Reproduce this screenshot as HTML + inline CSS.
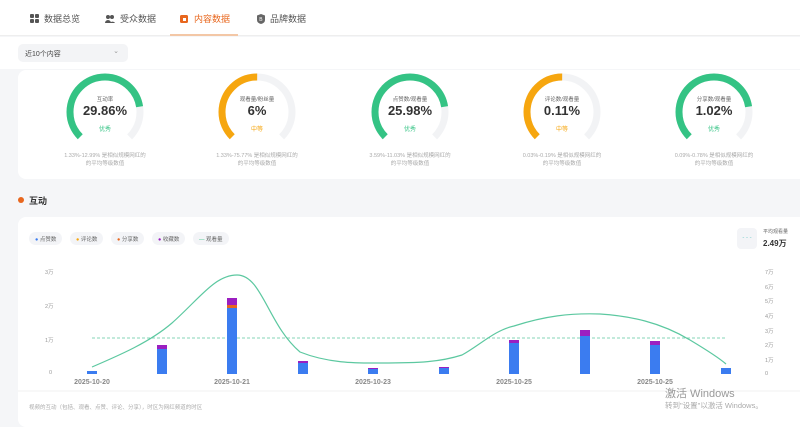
<!DOCTYPE html>
<html><head><meta charset="utf-8"><style>
*{margin:0;padding:0;box-sizing:border-box}
body{width:800px;height:418px;overflow:hidden;background:#f5f6f8;font-family:"Liberation Sans","Noto Sans CJK SC",sans-serif;position:relative;color:#333}
.nav{position:absolute;left:0;top:0;width:800px;height:36px;background:#fff;border-bottom:1px solid #eee}
.tab{position:absolute;top:12px;font-size:9px;color:#555;display:flex;align-items:center;gap:5px}
.tab.act{color:#e8671e}
.ul{position:absolute;left:170px;top:34px;width:68px;height:2px;background:#f3c7a6}
.top2{position:absolute;left:0;top:37px;width:800px;height:32px;background:#fff}
.dd{position:absolute;left:18px;top:44px;width:110px;height:18px;background:#f3f4f6;border-radius:5px;font-size:7px;color:#444;padding:5px 7px}
.card{position:absolute;background:#fff;border-radius:8px}
.g{position:absolute;width:120px;text-align:center}
.gl{position:absolute;top:95px;font-size:5.5px;color:#666;width:80px;text-align:center}
.gv{position:absolute;top:103px;font-size:13px;font-weight:bold;color:#333;width:80px;text-align:center}
.gs{position:absolute;top:124px;font-size:6px;width:80px;text-align:center}
.gd{position:absolute;top:152px;font-size:5.5px;color:#aaa;width:120px;text-align:center;line-height:8px}
.pill{position:absolute;top:232px;height:13px;border-radius:7px;background:#f3f4f7;font-size:5.5px;color:#666;padding:3px 6px}
.yl{position:absolute;font-size:5.5px;color:#999}
.xl{position:absolute;top:379px;font-size:7px;color:#888;font-weight:bold;width:60px;text-align:center}
</style></head><body>
<div class="nav">
 <div class="tab" style="left:30px"><svg width="9" height="9"><rect x="0" y="0" width="4" height="4" rx="1" fill="#555"/><rect x="5" y="0" width="4" height="4" rx="1" fill="#555"/><rect x="0" y="5" width="4" height="4" rx="1" fill="#555"/><rect x="5" y="5" width="4" height="4" rx="1" fill="#555"/></svg>数据总览</div>
 <div class="tab" style="left:105px"><svg width="10" height="8"><circle cx="3" cy="2" r="2" fill="#555"/><circle cx="7" cy="2" r="2" fill="#555"/><path d="M0 8a3 3 0 0 1 6 0zM5 8a3 3 0 0 1 5 0z" fill="#555"/></svg>受众数据</div>
 <div class="tab act" style="left:180px"><svg width="9" height="9"><rect x="0" y="1" width="8" height="8" rx="1.5" fill="#e8671e"/><rect x="3" y="4" width="3" height="3" fill="#fff"/></svg>内容数据</div>
 <div class="tab" style="left:257px"><svg width="8" height="10"><path d="M4 0L8 1.5V6Q8 9 4 10Q0 9 0 6V1.5Z" fill="#666"/><text x="2.3" y="7" font-size="5" fill="#fff">B</text></svg>品牌数据</div>
 <div class="ul"></div>
</div>
<div class="top2"></div>
<div class="dd">近10个内容<span style="position:absolute;right:9px;top:3px;color:#999">⌄</span></div>
<div class="card" style="left:18px;top:70px;width:790px;height:109px"></div>
<svg style="position:absolute;left:0;top:0" width="800" height="180">
 <g fill="none" stroke-width="7">
 <g transform="translate(105,112) rotate(135)"><circle r="35" stroke="#f2f3f5" stroke-dasharray="164.9 300"/><circle r="35" stroke="#34c384" stroke-dasharray="131.9 300"/></g>
 <g transform="translate(257,112) rotate(135)"><circle r="35" stroke="#f2f3f5" stroke-dasharray="164.9 300"/><circle r="35" stroke="#f6a60f" stroke-dasharray="82.5 300"/></g>
 <g transform="translate(410,112) rotate(135)"><circle r="35" stroke="#f2f3f5" stroke-dasharray="164.9 300"/><circle r="35" stroke="#34c384" stroke-dasharray="131.9 300"/></g>
 <g transform="translate(562,112) rotate(135)"><circle r="35" stroke="#f2f3f5" stroke-dasharray="164.9 300"/><circle r="35" stroke="#f6a60f" stroke-dasharray="82.5 300"/></g>
 <g transform="translate(714,112) rotate(135)"><circle r="35" stroke="#f2f3f5" stroke-dasharray="164.9 300"/><circle r="35" stroke="#34c384" stroke-dasharray="131.9 300"/></g>
 </g>
</svg>
<div class="gl" style="left:65px">互动率</div><div class="gv" style="left:65px">29.86%</div><div class="gs" style="left:65px;color:#34c384">优秀</div><div class="gd" style="left:45px">1.33%-12.99% 是相似规模网红的<br>的平均等级数值</div>
<div class="gl" style="left:217px">观看量/粉丝量</div><div class="gv" style="left:217px">6%</div><div class="gs" style="left:217px;color:#f6a60f">中等</div><div class="gd" style="left:197px">1.33%-75.77% 是相似规模网红的<br>的平均等级数值</div>
<div class="gl" style="left:370px">点赞数/观看量</div><div class="gv" style="left:370px">25.98%</div><div class="gs" style="left:370px;color:#34c384">优秀</div><div class="gd" style="left:350px">3.59%-11.03% 是相似规模网红的<br>的平均等级数值</div>
<div class="gl" style="left:522px">评论数/观看量</div><div class="gv" style="left:522px">0.11%</div><div class="gs" style="left:522px;color:#f6a60f">中等</div><div class="gd" style="left:502px">0.03%-0.19% 是相似规模网红的<br>的平均等级数值</div>
<div class="gl" style="left:674px">分享数/观看量</div><div class="gv" style="left:674px">1.02%</div><div class="gs" style="left:674px;color:#34c384">优秀</div><div class="gd" style="left:654px">0.09%-0.78% 是相似规模网红的<br>的平均等级数值</div>

<div style="position:absolute;left:18px;top:197px;width:6px;height:6px;border-radius:50%;background:#e8671e"></div>
<div style="position:absolute;left:29px;top:194px;font-size:9px;font-weight:bold;color:#333">互动</div>
<div class="card" style="left:18px;top:217px;width:790px;height:210px"></div>
<div class="pill" style="left:29px"><span style="color:#3b7cf0">●</span> 点赞数</div>
<div class="pill" style="left:70px"><span style="color:#f6a60f">●</span> 评论数</div>
<div class="pill" style="left:111px"><span style="color:#e8671e">●</span> 分享数</div>
<div class="pill" style="left:152px"><span style="color:#9b1fc1">●</span> 收藏数</div>
<div class="pill" style="left:193px"><span style="color:#34c384">—</span> 观看量</div>
<div style="position:absolute;left:737px;top:228px;width:20px;height:21px;background:#f3f4f7;border-radius:4px;font-size:6px;color:#7cc;text-align:center;line-height:21px">- - -</div>
<div style="position:absolute;left:763px;top:228px;font-size:5px;color:#666">平均观看量</div>
<div style="position:absolute;left:763px;top:238px;font-size:8px;font-weight:bold;color:#333">2.49万</div>
<div class="yl" style="left:45px;top:268px">3万</div><div class="yl" style="left:45px;top:302px">2万</div><div class="yl" style="left:45px;top:336px">1万</div><div class="yl" style="left:49px;top:370px">0</div>
<div class="yl" style="left:765px;top:268px">7万</div><div class="yl" style="left:765px;top:283px">6万</div><div class="yl" style="left:765px;top:297px">5万</div><div class="yl" style="left:765px;top:312px">4万</div><div class="yl" style="left:765px;top:327px">3万</div><div class="yl" style="left:765px;top:341px">2万</div><div class="yl" style="left:765px;top:356px">1万</div><div class="yl" style="left:765px;top:371px">0</div>
<svg style="position:absolute;left:0;top:0" width="800" height="418">
 <line x1="92" y1="338" x2="726" y2="338" stroke="#5cc8a0" stroke-width="0.8" stroke-dasharray="3 2"/>
 <g>
 <rect x="87" y="371" width="10" height="3" fill="#3b7cf0"/>
 <rect x="157" y="349" width="10" height="25" fill="#3b7cf0"/><rect x="157" y="345" width="10" height="4" fill="#9b1fc1"/>
 <rect x="227" y="308" width="10" height="66" fill="#3b7cf0"/><rect x="227" y="305" width="10" height="3" fill="#e8671e"/><rect x="227" y="298" width="10" height="7" fill="#9b1fc1"/>
 <rect x="298" y="363" width="10" height="11" fill="#3b7cf0"/><rect x="298" y="361" width="10" height="2" fill="#9b1fc1"/>
 <rect x="368" y="369" width="10" height="5" fill="#3b7cf0"/><rect x="368" y="368" width="10" height="1" fill="#9b1fc1"/>
 <rect x="439" y="368" width="10" height="6" fill="#3b7cf0"/><rect x="439" y="367" width="10" height="1" fill="#9b1fc1"/>
 <rect x="509" y="343" width="10" height="31" fill="#3b7cf0"/><rect x="509" y="340" width="10" height="3" fill="#9b1fc1"/>
 <rect x="580" y="336" width="10" height="38" fill="#3b7cf0"/><rect x="580" y="330" width="10" height="6" fill="#9b1fc1"/>
 <rect x="650" y="345" width="10" height="29" fill="#3b7cf0"/><rect x="650" y="341" width="10" height="4" fill="#9b1fc1"/>
 <rect x="721" y="368" width="10" height="6" fill="#3b7cf0"/>
 </g>
 <path d="M92 367 C120 355 150 342 172 323 C200 298 215 275 237 275 C262 275 268 325 300 352 C330 364 360 363 380 363 C420 363 440 362 462 355 C480 345 495 330 514 326 C545 316 570 313 600 314 C630 316 660 322 690 340 C705 349 718 357 726 364" fill="none" stroke="#5cc8a0" stroke-width="1.2"/>
 <line x1="18" y1="391" x2="800" y2="391" stroke="#f0f0f0" stroke-width="1"/>
</svg>
<div class="xl" style="left:62px">2025-10-20</div><div class="xl" style="left:202px">2025-10-21</div><div class="xl" style="left:343px">2025-10-23</div><div class="xl" style="left:484px">2025-10-25</div><div class="xl" style="left:625px">2025-10-25</div>
<div style="position:absolute;left:29px;top:403px;font-size:5.5px;color:#aaa">视频的互动（包括、观看、点赞、评论、分享），时区为网红频道的时区</div>
<div style="position:absolute;left:665px;top:385px;font-size:11px;color:#999">激活 Windows</div>
<div style="position:absolute;left:665px;top:400px;font-size:7.5px;color:#aaa">转到"设置"以激活 Windows。</div>
</body></html>
